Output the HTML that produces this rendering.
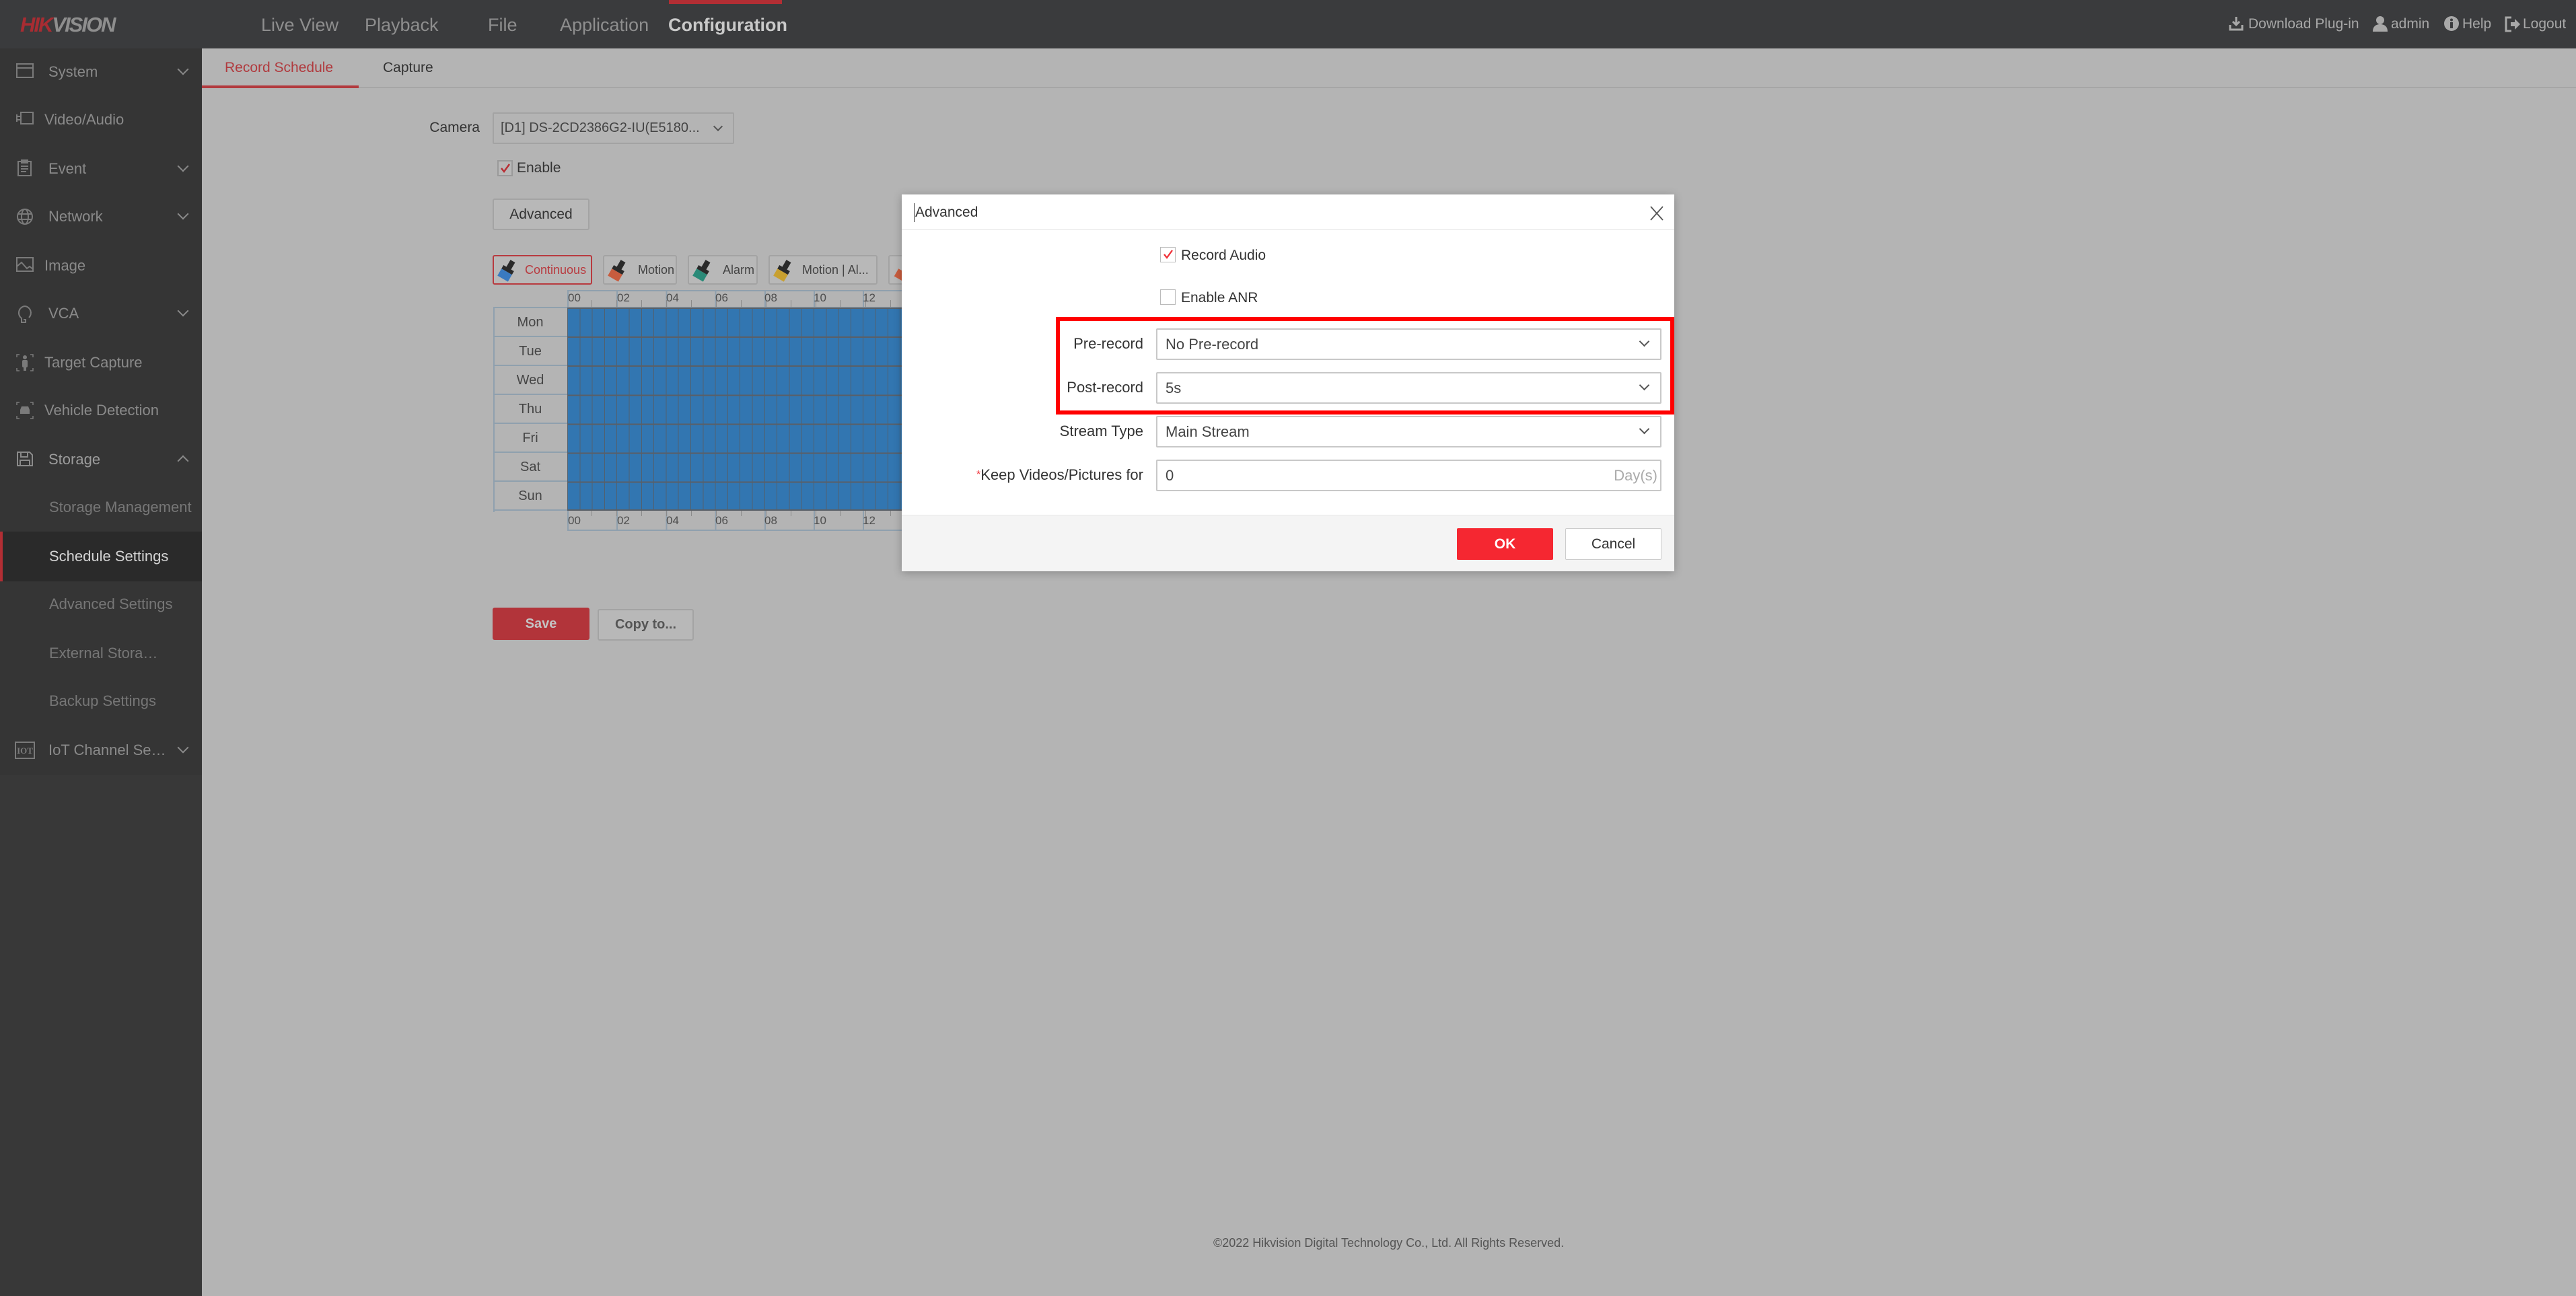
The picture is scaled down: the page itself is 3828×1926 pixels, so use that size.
<!DOCTYPE html>
<html><head><meta charset="utf-8">
<style>
*{margin:0;padding:0;box-sizing:border-box}
body{width:3828px;height:1926px;position:relative;overflow:hidden;background:#b4b4b4;font-family:"Liberation Sans",sans-serif}
.a{position:absolute}
.top{left:0;top:0;width:3828px;height:72px;background:#3a3b3d}
.nav{top:0;height:72px;line-height:74px;font-size:27px;color:#8e8e8e}
.side{left:0;top:72px;width:300px;height:1854px;background:#353535}
.si{left:72px;font-size:22px;color:#8a8a8a;line-height:30px;height:30px;margin-top:-15px}
.sub{left:73px;color:#767676}
.chev{left:266px;width:12px;height:12px;border-right:2px solid #8a8a8a;border-bottom:2px solid #8a8a8a;transform:rotate(45deg);margin-top:-10px}
.ic{left:24px;margin-top:-13px}
.btn{border:2px solid #a3a3a3;border-radius:3px;background:#b8b8b8;color:#444;font-size:20px;text-align:center}
.lbl{font-size:22px;color:#333;text-align:right;width:300px;line-height:30px;margin-top:-15px}
.sel{left:1718px;width:751px;height:47px;border:2px solid #c8c8c8;border-radius:2px;background:#fff;font-size:22px;color:#444;line-height:43px;padding-left:12px}
.sel i{position:absolute;right:18px;top:12px;width:11px;height:11px;border-right:2px solid #555;border-bottom:2px solid #555;transform:rotate(45deg)}
.day{left:733px;width:110px;height:43px;border-bottom:2px solid #8fa0ae;font-size:20px;color:#454545;text-align:center;line-height:42px}
.hl{font-size:17px;color:#4d4d4d}
.tr{top:22px;font-size:21px;color:#a8a8a8;line-height:28px}
</style></head><body>

<div class="a top"></div>
<div class="a" style="left:994px;top:0;width:168px;height:6px;background:#b22e34"></div>
<div class="a" style="left:30px;top:18px;font-size:31px;font-weight:bold;font-style:italic;letter-spacing:-2px;line-height:38px"><span style="color:#a82c32">HIK</span><span style="color:#8e8e8e">VISION</span></div>
<div class="a nav" style="left:388px">Live View</div>
<div class="a nav" style="left:542px">Playback</div>
<div class="a nav" style="left:725px">File</div>
<div class="a nav" style="left:832px">Application</div>
<div class="a nav" style="left:993px;color:#c9c9c9;font-weight:bold">Configuration</div>

<div class="a" style="left:3312px;top:24px;width:22px;height:22px">
<svg width="22" height="22" viewBox="0 0 22 22"><path d="M11 1v12M6 8l5 5 5-5" stroke="#a8a8a8" stroke-width="3" fill="none"/><path d="M2 13v7h18v-7" stroke="#a8a8a8" stroke-width="3" fill="none"/></svg></div>
<div class="a tr" style="left:3341px">Download Plug-in</div>
<div class="a" style="left:3526px;top:23px"><svg width="22" height="24" viewBox="0 0 22 24"><circle cx="11" cy="7" r="6" fill="#a8a8a8"/><path d="M0 24c0-8 5-11 11-11s11 3 11 11z" fill="#a8a8a8"/></svg></div>
<div class="a tr" style="left:3553px">admin</div>
<div class="a" style="left:3632px;top:24px"><svg width="22" height="22" viewBox="0 0 22 22"><circle cx="11" cy="11" r="11" fill="#a8a8a8"/><rect x="9" y="9" width="4" height="9" fill="#3a3b3d"/><circle cx="11" cy="5.5" r="2" fill="#3a3b3d"/></svg></div>
<div class="a tr" style="left:3659px">Help</div>
<div class="a" style="left:3722px;top:24px"><svg width="24" height="24" viewBox="0 0 24 24"><path d="M10 2H2v20h8" stroke="#a8a8a8" stroke-width="3" fill="none"/><path d="M9 9h6V4l8 8-8 8v-5H9z" fill="#a8a8a8"/></svg></div>
<div class="a tr" style="left:3749px">Logout</div>

<div class="a side"></div>
<div class="a" style="left:0;top:1152px;width:300px;height:774px;background:#383838"></div>
<div class="a" style="left:0;top:790px;width:300px;height:74px;background:#2a2a2a"></div>
<div class="a" style="left:0;top:790px;width:4px;height:74px;background:#b22e34"></div>

<svg class="a ic" style="top:107px" width="26" height="22"><rect x="1" y="1" width="24" height="20" fill="none" stroke="#7a7a7a" stroke-width="2"/><line x1="1" y1="7" x2="25" y2="7" stroke="#7a7a7a" stroke-width="2"/></svg>
<div class="a si" style="top:107px">System</div><div class="a chev" style="top:107px"></div>
<svg class="a ic" style="top:178px" width="26" height="22"><rect x="7" y="2" width="18" height="17" fill="none" stroke="#7a7a7a" stroke-width="2"/><path d="M1 5v11M1 8h6M1 13h6" stroke="#7a7a7a" stroke-width="2"/></svg>
<div class="a si" style="left:66px;top:178px">Video/Audio</div>
<svg class="a ic" style="top:249px" width="26" height="26"><rect x="3" y="4" width="19" height="21" fill="none" stroke="#7a7a7a" stroke-width="2"/><path d="M8 2h9v4H8zM7 11h11M7 15h11M7 19h8" stroke="#7a7a7a" stroke-width="2" fill="none"/></svg>
<div class="a si" style="top:251px">Event</div><div class="a chev" style="top:251px"></div>
<svg class="a ic" style="top:322px" width="26" height="26"><circle cx="13" cy="13" r="11" fill="none" stroke="#7a7a7a" stroke-width="2"/><ellipse cx="13" cy="13" rx="5" ry="11" fill="none" stroke="#7a7a7a" stroke-width="2"/><path d="M2 9h22M2 17h22" stroke="#7a7a7a" stroke-width="2"/></svg>
<div class="a si" style="top:322px">Network</div><div class="a chev" style="top:322px"></div>
<svg class="a ic" style="top:395px" width="26" height="22"><rect x="1" y="1" width="24" height="20" fill="none" stroke="#7a7a7a" stroke-width="2"/><path d="M1 14l7-6 8 9 4-3 5 4" stroke="#7a7a7a" stroke-width="2" fill="none"/></svg>
<div class="a si" style="left:66px;top:395px">Image</div>
<svg class="a ic" style="top:466px" width="26" height="28"><path d="M13 2a10 10 0 0 0-5 18v6h6v-4h-3" stroke="#7a7a7a" stroke-width="2" fill="none"/><path d="M13 2a10 10 0 0 1 6 17" stroke="#7a7a7a" stroke-width="2" fill="none"/></svg>
<div class="a si" style="top:466px">VCA</div><div class="a chev" style="top:466px"></div>
<svg class="a ic" style="top:539px" width="26" height="26"><path d="M1 5V1h4M21 1h4v4M25 21v4h-4M5 25H1v-4" stroke="#7a7a7a" stroke-width="1.5" fill="none"/><circle cx="13" cy="5" r="3" fill="#7a7a7a"/><rect x="9" y="9" width="8" height="11" rx="2" fill="#7a7a7a"/><rect x="11" y="18" width="4" height="7" fill="#7a7a7a"/></svg>
<div class="a si" style="left:66px;top:539px">Target Capture</div>
<svg class="a ic" style="top:610px" width="26" height="26"><path d="M1 5V1h4M21 1h4v4M25 21v4h-4M5 25H1v-4" stroke="#7a7a7a" stroke-width="1.5" fill="none"/><path d="M6 12l2-5h10l2 5v6H6z" fill="#7a7a7a"/></svg>
<div class="a si" style="left:66px;top:610px">Vehicle Detection</div>
<svg class="a ic" style="top:683px" width="26" height="24"><path d="M2 2h18l4 4v16H2z" fill="none" stroke="#8a8a8a" stroke-width="2"/><rect x="7" y="2" width="10" height="7" fill="none" stroke="#8a8a8a" stroke-width="2"/><rect x="6" y="14" width="14" height="8" fill="none" stroke="#8a8a8a" stroke-width="2"/></svg>
<div class="a si" style="top:683px;color:#9c9c9c">Storage</div>
<div class="a" style="left:266px;top:679px;width:12px;height:12px;border-left:2px solid #8a8a8a;border-top:2px solid #8a8a8a;transform:rotate(45deg)"></div>
<div class="a si sub" style="top:754px">Storage Management</div>
<div class="a si sub" style="top:827px;color:#d4d4d4">Schedule Settings</div>
<div class="a si sub" style="top:898px">Advanced Settings</div>
<div class="a si sub" style="top:971px">External Stora…</div>
<div class="a si sub" style="top:1042px">Backup Settings</div>
<svg class="a ic" style="left:22px;top:1115px" width="30" height="26"><rect x="1" y="1" width="28" height="24" fill="none" stroke="#7a7a7a" stroke-width="2"/><text x="15" y="18" font-size="13" fill="#7a7a7a" text-anchor="middle" font-family="Liberation Serif" font-weight="bold">IOT</text></svg>
<div class="a si" style="top:1115px">IoT Channel Se…</div><div class="a chev" style="top:1115px"></div>

<div class="a" style="left:300px;top:129px;width:3528px;height:2px;background:#a6a6a6"></div>
<div class="a" style="left:300px;top:127px;width:233px;height:4px;background:#b23a3e"></div>
<div class="a" style="left:334px;top:86px;font-size:21px;color:#b03a3e;line-height:30px">Record Schedule</div>
<div class="a" style="left:569px;top:86px;font-size:21px;color:#333;line-height:30px">Capture</div>

<div class="a" style="left:637px;top:175px;width:76px;text-align:right;font-size:21px;color:#333;line-height:30px">Camera</div>
<div class="a" style="left:732px;top:167px;width:359px;height:47px;border:2px solid #a3a3a3;border-radius:2px;font-size:20px;color:#444;line-height:43px;padding-left:10px">[D1] DS-2CD2386G2-IU(E5180...</div>
<div class="a" style="left:1062px;top:183px;width:10px;height:10px;border-right:2px solid #555;border-bottom:2px solid #555;transform:rotate(45deg)"></div>
<div class="a" style="left:739px;top:238px;width:23px;height:24px;border:2px solid #9a9a9a;background:#b8b8b8"></div>
<svg class="a" style="left:742px;top:242px" width="18" height="16"><path d="M3 8l4 5 8-11" stroke="#b82f35" stroke-width="2.5" fill="none"/></svg>
<div class="a" style="left:768px;top:235px;font-size:21px;color:#333;line-height:30px">Enable</div>
<div class="a btn" style="left:732px;top:295px;width:144px;height:47px;line-height:43px;font-size:21px;color:#333">Advanced</div>

<div class="a btn" style="left:732px;top:379px;width:148px;height:44px;border-color:#b83a3f;color:#b83a3f;line-height:40px;padding-left:46px;text-align:left;font-size:18px">Continuous</div>
<div class="a btn" style="left:896px;top:379px;width:110px;height:44px;line-height:40px;padding-left:50px;text-align:left;font-size:18px">Motion</div>
<div class="a btn" style="left:1022px;top:379px;width:104px;height:44px;line-height:40px;padding-left:50px;text-align:left;font-size:18px">Alarm</div>
<div class="a btn" style="left:1142px;top:379px;width:162px;height:44px;line-height:40px;padding-left:48px;text-align:left;font-size:18px">Motion | Al...</div>
<div class="a btn" style="left:1320px;top:379px;width:60px;height:44px"></div>
<svg class="a" style="left:738px;top:385px" width="32" height="34"><g transform="rotate(30 16 17)"><rect x="12" y="1" width="8" height="14" fill="#2a2a2a"/><rect x="7" y="13" width="18" height="6" fill="#2a2a2a"/><rect x="7" y="19" width="18" height="12" fill="#3a7ac0"/></g></svg>
<svg class="a" style="left:902px;top:385px" width="32" height="34"><g transform="rotate(30 16 17)"><rect x="12" y="1" width="8" height="14" fill="#2a2a2a"/><rect x="7" y="13" width="18" height="6" fill="#2a2a2a"/><rect x="7" y="19" width="18" height="12" fill="#c85c3e"/></g></svg>
<svg class="a" style="left:1028px;top:385px" width="32" height="34"><g transform="rotate(30 16 17)"><rect x="12" y="1" width="8" height="14" fill="#2a2a2a"/><rect x="7" y="13" width="18" height="6" fill="#2a2a2a"/><rect x="7" y="19" width="18" height="12" fill="#2a8a78"/></g></svg>
<svg class="a" style="left:1148px;top:385px" width="32" height="34"><g transform="rotate(30 16 17)"><rect x="12" y="1" width="8" height="14" fill="#2a2a2a"/><rect x="7" y="13" width="18" height="6" fill="#2a2a2a"/><rect x="7" y="19" width="18" height="12" fill="#c8a030"/></g></svg>
<svg class="a" style="left:1327px;top:385px" width="34" height="34"><g transform="rotate(30 17 17)"><rect x="8" y="19" width="19" height="13" fill="#c85c3e"/></g></svg>

<div class="a" style="left:843px;top:431px;width:878px;height:2px;background:#8fa0ae"></div>
<div class="a" style="left:843px;top:431px;width:878px;height:26px;background:repeating-linear-gradient(90deg,#8fa0ae 0 2px,transparent 2px 73.2px)"></div>
<div class="a" style="left:843px;top:446px;width:878px;height:10px;background:repeating-linear-gradient(90deg,transparent 0 36px,#8a8a8a 36px 37px,transparent 37px 36.6px)"></div>
<div class="a hl" style="left:844px;top:433px">00</div><div class="a hl" style="left:917px;top:433px">02</div><div class="a hl" style="left:990px;top:433px">04</div><div class="a hl" style="left:1063px;top:433px">06</div><div class="a hl" style="left:1136px;top:433px">08</div><div class="a hl" style="left:1209px;top:433px">10</div><div class="a hl" style="left:1282px;top:433px">12</div>
<div class="a" style="left:733px;top:456px;width:988px;height:2px;background:#8fa0ae"></div>
<div class="a" style="left:733px;top:456px;width:2px;height:305px;background:#8fa0ae"></div>
<div class="a day" style="top:458px">Mon</div><div class="a day" style="top:501px">Tue</div><div class="a day" style="top:544px">Wed</div><div class="a day" style="top:587px">Thu</div><div class="a day" style="top:630px">Fri</div><div class="a day" style="top:673px">Sat</div><div class="a day" style="top:716px">Sun</div>
<div class="a" style="left:843px;top:457px;width:878px;height:302px;background:#3276b1"></div>
<div class="a" style="left:843px;top:457px;width:878px;height:302px;background:repeating-linear-gradient(90deg,#51606e 0 1px,transparent 1px 18.3px)"></div>
<div class="a" style="left:843px;top:457px;width:878px;height:302px;background:repeating-linear-gradient(180deg,#5a5f66 0 2px,transparent 2px 43.1px)"></div>
<div class="a" style="left:843px;top:757px;width:878px;height:2px;background:#5a5f66"></div>
<div class="a" style="left:843px;top:759px;width:878px;height:30px;background:repeating-linear-gradient(90deg,#8fa0ae 0 2px,transparent 2px 73.2px)"></div>
<div class="a" style="left:843px;top:759px;width:878px;height:8px;background:repeating-linear-gradient(90deg,transparent 0 36px,#8a8a8a 36px 37px,transparent 37px 36.6px)"></div>
<div class="a" style="left:843px;top:787px;width:878px;height:2px;background:#8fa0ae"></div>
<div class="a hl" style="left:844px;top:764px">00</div><div class="a hl" style="left:917px;top:764px">02</div><div class="a hl" style="left:990px;top:764px">04</div><div class="a hl" style="left:1063px;top:764px">06</div><div class="a hl" style="left:1136px;top:764px">08</div><div class="a hl" style="left:1209px;top:764px">10</div><div class="a hl" style="left:1282px;top:764px">12</div>

<div class="a" style="left:732px;top:903px;width:144px;height:48px;background:#b2343a;border-radius:3px;color:#c4c4c4;font-size:20px;font-weight:bold;text-align:center;line-height:48px">Save</div>
<div class="a btn" style="left:888px;top:905px;width:143px;height:47px;line-height:43px;font-weight:bold;color:#555">Copy to...</div>

<div class="a" style="left:1803px;top:1835px;font-size:18px;color:#555;line-height:24px">©2022 Hikvision Digital Technology Co., Ltd. All Rights Reserved.</div>

<div class="a" style="left:1340px;top:289px;width:1148px;height:560px;background:#fff;box-shadow:0 2px 12px rgba(0,0,0,.25)"></div>
<div class="a" style="left:1340px;top:341px;width:1148px;height:1px;background:#e4e4e4"></div>
<div class="a" style="left:1358px;top:302px;font-size:21px;color:#333;line-height:28px;border-left:1px solid #333;padding-left:1px">Advanced</div>
<svg class="a" style="left:2451px;top:305px" width="22" height="24"><path d="M2 2l18 20M20 2L2 22" stroke="#555" stroke-width="1.8"/></svg>

<div class="a" style="left:1724px;top:367px;width:23px;height:23px;border:1px solid #bbb;background:#fff"></div>
<svg class="a" style="left:1727px;top:370px" width="18" height="16"><path d="M3 8l4 5 8-11" stroke="#f03038" stroke-width="2.3" fill="none"/></svg>
<div class="a" style="left:1755px;top:365px;font-size:21px;color:#333;line-height:30px">Record Audio</div>
<div class="a" style="left:1724px;top:430px;width:23px;height:23px;border:1px solid #bbb;background:#fff"></div>
<div class="a" style="left:1755px;top:428px;font-size:21px;color:#333;line-height:30px">Enable ANR</div>

<div class="a lbl" style="left:1399px;top:511px">Pre-record</div>
<div class="a sel" style="top:488px">No Pre-record<i></i></div>
<div class="a lbl" style="left:1399px;top:576px">Post-record</div>
<div class="a sel" style="top:553px">5s<i></i></div>
<div class="a lbl" style="left:1399px;top:641px">Stream Type</div>
<div class="a sel" style="top:618px">Main Stream<i></i></div>
<div class="a lbl" style="left:1399px;top:706px"><span style="color:#f03038;font-size:16px;vertical-align:top">*</span>Keep Videos/Pictures for</div>
<div class="a sel" style="top:683px">0<span style="position:absolute;right:4px;color:#aaa">Day(s)</span></div>

<div class="a" style="left:1569px;top:471px;width:919px;height:145px;border:6px solid #ff0000"></div>

<div class="a" style="left:1340px;top:765px;width:1148px;height:84px;background:#f4f4f4;border-top:1px solid #e8e8e8"></div>
<div class="a" style="left:2165px;top:785px;width:143px;height:47px;background:#f52731;border-radius:2px;color:#fff;font-size:21px;font-weight:bold;text-align:center;line-height:47px">OK</div>
<div class="a" style="left:2326px;top:785px;width:143px;height:47px;background:#fff;border:1px solid #ccc;border-radius:2px;color:#333;font-size:21px;text-align:center;line-height:45px">Cancel</div>
</body></html>
